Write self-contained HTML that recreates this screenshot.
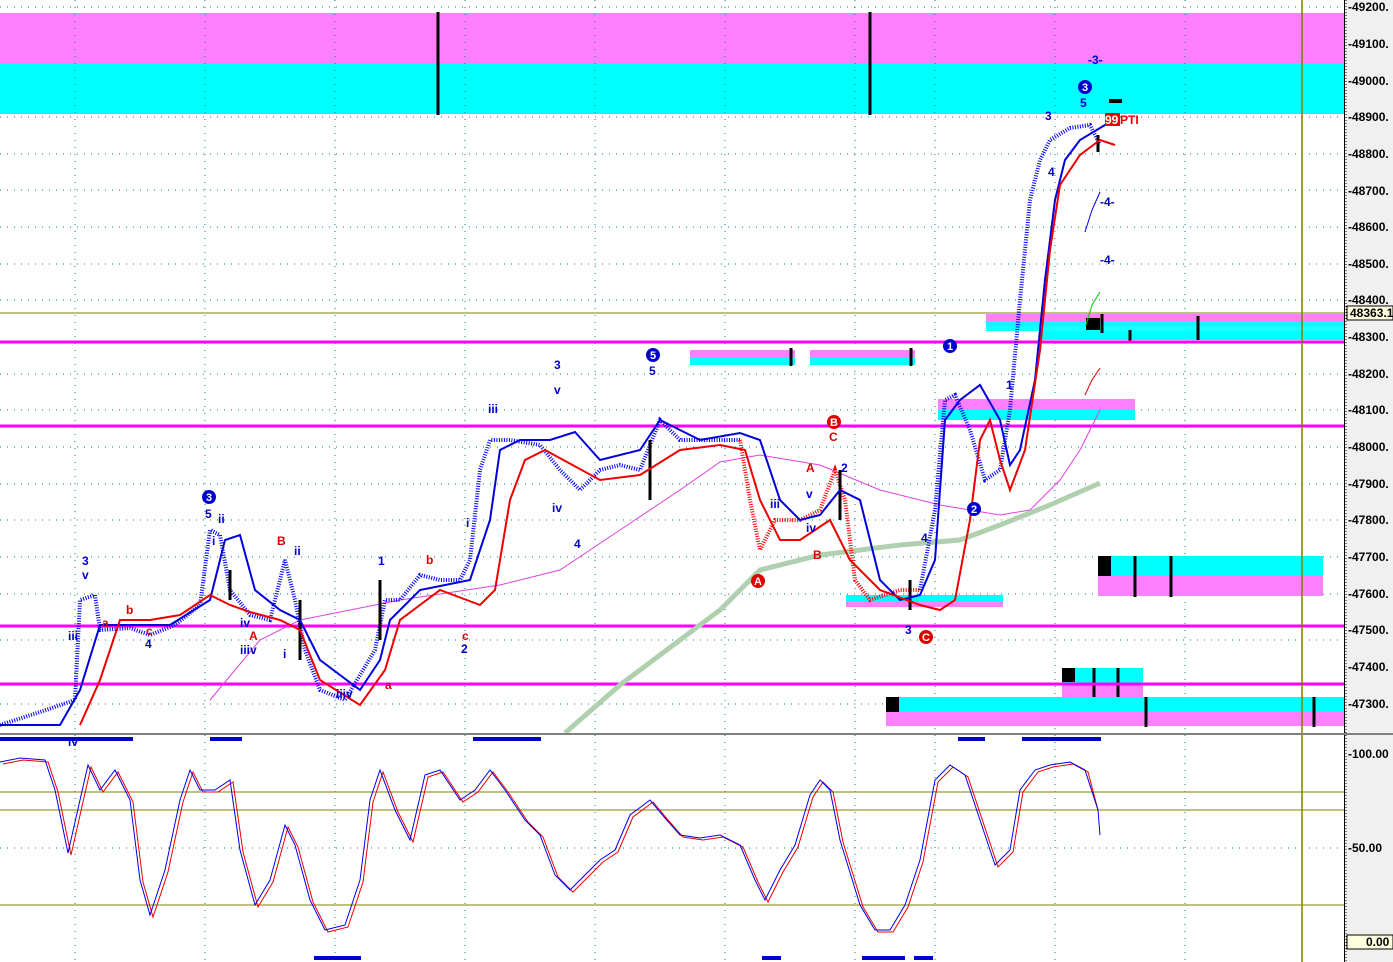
<!DOCTYPE html>
<html><head><meta charset="utf-8"><style>
html,body{margin:0;padding:0;background:#fff;width:1393px;height:962px;overflow:hidden;font-family:"Liberation Sans",sans-serif}
svg text{font-family:"Liberation Sans",sans-serif;font-weight:bold}
</style></head><body>
<svg width="1393" height="962" xmlns="http://www.w3.org/2000/svg">
<rect x="0" y="0" width="1393" height="962" fill="#fff"/>
<rect x="0" y="13" width="1344" height="50" fill="#ff80ff"/>
<rect x="0" y="63" width="1344" height="51" fill="#00ffff"/>
<g stroke="#008080" stroke-width="1" stroke-dasharray="1,6">
<line x1="0" y1="7" x2="1344" y2="7"/><line x1="0" y1="117" x2="1344" y2="117"/>
<line x1="0" y1="154" x2="1344" y2="154"/><line x1="0" y1="190" x2="1344" y2="190"/>
<line x1="0" y1="227" x2="1344" y2="227"/><line x1="0" y1="264" x2="1344" y2="264"/>
<line x1="0" y1="300" x2="1344" y2="300"/><line x1="0" y1="374" x2="1344" y2="374"/>
<line x1="0" y1="410" x2="1344" y2="410"/><line x1="0" y1="447" x2="1344" y2="447"/>
<line x1="0" y1="484" x2="1344" y2="484"/><line x1="0" y1="520" x2="1344" y2="520"/>
<line x1="0" y1="557" x2="1344" y2="557"/><line x1="0" y1="594" x2="1344" y2="594"/>
<line x1="0" y1="640" x2="1344" y2="640"/><line x1="0" y1="704" x2="1344" y2="704"/>
<line x1="0" y1="848" x2="1344" y2="848"/>
<line x1="75" y1="0" x2="75" y2="962"/><line x1="205" y1="0" x2="205" y2="962"/>
<line x1="335" y1="0" x2="335" y2="962"/><line x1="465" y1="0" x2="465" y2="962"/>
<line x1="595" y1="0" x2="595" y2="962"/><line x1="725" y1="0" x2="725" y2="962"/>
<line x1="855" y1="0" x2="855" y2="962"/><line x1="935" y1="0" x2="935" y2="962"/>
<line x1="1055" y1="0" x2="1055" y2="962"/><line x1="1185" y1="0" x2="1185" y2="962"/>
</g>
<line x1="438" y1="12" x2="438" y2="115" stroke="#000" stroke-width="3"/>
<line x1="870" y1="12" x2="870" y2="115" stroke="#000" stroke-width="3"/>
<rect x="986" y="314" width="358" height="13" fill="#ff80ff"/><rect x="986" y="322" width="358" height="9" fill="#00ffff" opacity="0.9"/>
<rect x="1040" y="331" width="304" height="9" fill="#00ffff"/>
<rect x="690" y="350" width="105" height="7" fill="#ff80ff"/><rect x="690" y="357" width="105" height="8" fill="#00ffff"/>
<rect x="810" y="350" width="105" height="7" fill="#ff80ff"/><rect x="810" y="357" width="105" height="8" fill="#00ffff"/>
<rect x="938" y="399" width="197" height="11" fill="#ff80ff"/><rect x="938" y="410" width="197" height="10" fill="#00ffff"/>
<rect x="846" y="595" width="157" height="7" fill="#00ffff"/><rect x="846" y="602" width="157" height="5" fill="#ff80ff"/>
<rect x="1098" y="556" width="225" height="20" fill="#00ffff"/><rect x="1098" y="576" width="225" height="20" fill="#ff80ff"/>
<rect x="1062" y="668" width="81" height="15" fill="#00ffff"/><rect x="1062" y="683" width="81" height="14" fill="#ff80ff"/>
<rect x="886" y="697" width="458" height="15" fill="#00ffff"/><rect x="886" y="712" width="458" height="14" fill="#ff80ff"/>
<g stroke="#000" stroke-width="3">
<line x1="791" y1="348" x2="791" y2="366"/><line x1="911" y1="348" x2="911" y2="366"/>
<line x1="1135" y1="556" x2="1135" y2="597"/><line x1="1171" y1="556" x2="1171" y2="597"/>
<line x1="1094" y1="668" x2="1094" y2="697"/><line x1="1118" y1="668" x2="1118" y2="697"/>
<line x1="1146" y1="697" x2="1146" y2="727"/><line x1="1314" y1="697" x2="1314" y2="727"/>
<line x1="1198" y1="316" x2="1198" y2="340"/><line x1="1102" y1="314" x2="1102" y2="333"/><line x1="1130" y1="330" x2="1130" y2="342"/>
</g>
<rect x="1098" y="556" width="13" height="20" fill="#000"/>
<rect x="1062" y="668" width="13" height="14" fill="#000"/>
<rect x="886" y="697" width="13" height="15" fill="#000"/>
<rect x="1086" y="318" width="14" height="12" fill="#000"/>
<line x1="0" y1="313" x2="1344" y2="313" stroke="#808000" stroke-width="1"/>
<line x1="0" y1="342" x2="1344" y2="342" stroke="#ff00ff" stroke-width="3"/>
<line x1="0" y1="426" x2="1344" y2="426" stroke="#ff00ff" stroke-width="3"/>
<line x1="0" y1="626" x2="1344" y2="626" stroke="#ff00ff" stroke-width="3"/>
<line x1="0" y1="684" x2="1344" y2="684" stroke="#ff00ff" stroke-width="3"/>
<line x1="1302" y1="0" x2="1302" y2="962" stroke="#808000" stroke-width="1.5"/>
<polyline fill="none" stroke="#b0d0b0" stroke-width="5" points="565,733 620,685 680,640 720,610 760,570 820,555 900,545 960,540 1000,525 1050,505 1100,483"/>
<polyline fill="none" stroke="#e040e0" stroke-width="1" points="210,700 260,640 300,620 400,600 500,585 560,570 620,530 680,490 720,462 760,455 820,465 880,490 940,505 1000,515 1030,510 1060,480 1080,450 1100,410"/>
<polyline fill="none" stroke="#0000ff" stroke-width="4" stroke-dasharray="1,1.5" points="0,725 40,712 75,700 80,600 95,595 100,630 130,628 150,635 175,625 200,605 210,530 220,535 230,590 250,615 270,620 285,560 295,600 305,650 320,690 345,700 375,650 385,600 400,600 420,575 440,580 460,580 470,560 480,470 490,440 510,440 540,445 560,470 580,490 600,470 620,465 640,470 660,420 680,440 710,440 740,440"/>
<polyline fill="none" stroke="#ff0000" stroke-width="4" stroke-dasharray="1,1.5" points="740,440 750,500 760,550 775,520 800,520 820,510 835,470 845,500 855,580 870,600 900,590 920,590"/>
<polyline fill="none" stroke="#0000ff" stroke-width="4" stroke-dasharray="1,1.5" points="920,590 935,510 945,400 955,395 970,430 985,480 1000,470 1010,410 1020,300 1030,200 1040,160 1050,140 1070,128 1090,125 1100,145"/>
<g stroke="#000" stroke-width="3"><line x1="230" y1="570" x2="230" y2="600"/><line x1="300" y1="600" x2="300" y2="660"/><line x1="380" y1="580" x2="380" y2="640"/><line x1="650" y1="440" x2="650" y2="500"/><line x1="840" y1="470" x2="840" y2="520"/><line x1="910" y1="580" x2="910" y2="610"/><line x1="1098" y1="135" x2="1098" y2="152"/></g>
<polyline fill="none" stroke="#0000dd" stroke-width="2" points="0,725 60,725 80,690 100,625 130,625 170,625 210,600 225,540 240,535 255,590 280,610 300,620 320,660 360,690 380,660 390,620 420,590 470,580 490,520 500,450 520,440 550,440 575,432 600,460 640,450 660,420 700,440 740,433 760,440 780,500 800,520 820,515 840,490 860,500 880,580 900,600 920,595 935,560 945,420 960,400 980,385 1000,420 1010,465 1020,450 1035,380 1045,280 1055,200 1065,160 1080,140 1110,122"/>
<polyline fill="none" stroke="#ee0000" stroke-width="2" points="80,725 100,680 120,620 150,620 180,615 210,595 230,605 250,612 280,620 300,630 320,680 360,705 385,670 400,620 440,590 480,605 495,590 510,500 525,460 545,450 600,480 640,475 680,450 720,445 745,450 760,500 780,540 800,540 830,520 850,560 880,590 920,605 940,610 955,600 970,520 980,440 990,420 1000,460 1010,490 1025,450 1040,350 1050,250 1060,185 1080,155 1100,140 1115,145"/>
<g font-size="12" fill="#0000cc">
<text x="82" y="565">3</text><text x="82" y="579">v</text><text x="145" y="648">4</text><text x="205" y="518">5</text><text x="212" y="545">i</text><text x="218" y="523">ii</text>
<text x="294" y="555">ii</text><text x="283" y="658">i</text><text x="378" y="565">1</text><text x="336" y="698">iiiv</text><text x="461" y="653">2</text>
<text x="488" y="413">iii</text><text x="554" y="369">3</text><text x="554" y="394">v</text><text x="552" y="512">iv</text><text x="574" y="548">4</text>
<text x="649" y="375">5</text><text x="770" y="508">iii</text><text x="806" y="498">v</text><text x="806" y="532">iv</text><text x="841" y="472">2</text>
<text x="921" y="542">4</text><text x="905" y="634">3</text><text x="921" y="640">5</text><text x="1006" y="389">1</text>
<text x="1045" y="120">3</text><text x="1080" y="107">5</text><text x="1048" y="176">4</text><text x="1088" y="64">-3-</text><text x="1100" y="206">-4-</text><text x="1100" y="264">-4-</text>
<text x="68" y="640">iii</text><text x="240" y="627">iv</text><text x="240" y="654">iiiv</text><text x="466" y="527">i</text><text x="68" y="746">iv</text>
</g>
<g font-size="12" fill="#dd0000">
<text x="126" y="614">b</text><text x="102" y="627">a</text><text x="146" y="635">c</text><text x="277" y="545">B</text><text x="249" y="640">A</text>
<text x="426" y="564">b</text><text x="385" y="689">a</text><text x="462" y="640">c</text><text x="806" y="472">A</text><text x="829" y="441">C</text><text x="813" y="559">B</text>
</g>
<g font-size="11" fill="#fff" text-anchor="middle">
<circle cx="209" cy="497" r="7" fill="#0000cc"/><text x="209" y="501">3</text>
<circle cx="653" cy="355" r="7" fill="#0000cc"/><text x="653" y="359">5</text>
<circle cx="950" cy="346" r="7" fill="#0000cc"/><text x="950" y="350">1</text>
<circle cx="974" cy="509" r="7" fill="#0000cc"/><text x="974" y="513">2</text>
<circle cx="1085" cy="87" r="7" fill="#0000cc"/><text x="1085" y="91">3</text>
<circle cx="758" cy="581" r="7" fill="#dd0000"/><text x="758" y="585">A</text>
<circle cx="834" cy="422" r="7" fill="#dd0000"/><text x="834" y="426">B</text>
<circle cx="926" cy="637" r="7" fill="#dd0000"/><text x="926" y="641">C</text>
</g>
<rect x="1105" y="113" width="15" height="13" fill="#ee0000"/>
<text x="1105" y="124" font-size="12" fill="#fff">99</text><text x="1120" y="124" font-size="12" fill="#ee0000">PTI</text>
<rect x="1109" y="99" width="13" height="4" fill="#000"/>
<polyline fill="none" stroke="#00cc00" stroke-width="1" points="1086,325 1092,305 1100,292"/>
<polyline fill="none" stroke="#dd0000" stroke-width="1" points="1085,395 1092,380 1100,368"/>
<polyline fill="none" stroke="#0000dd" stroke-width="1" points="1085,232 1092,210 1100,192"/>
<g fill="#0000cc"><rect x="0" y="737" width="133" height="4"/><rect x="210" y="737" width="32" height="4"/><rect x="473" y="737" width="68" height="4"/><rect x="958" y="737" width="27" height="4"/><rect x="1022" y="737" width="79" height="4"/>
<rect x="314" y="956" width="47" height="4"/><rect x="762" y="956" width="19" height="4"/><rect x="862" y="956" width="43" height="4"/><rect x="914" y="956" width="19" height="4"/></g>
<line x1="0" y1="734" x2="1344" y2="734" stroke="#808080" stroke-width="2"/>
<g stroke="#808000" stroke-width="1"><line x1="0" y1="792" x2="1344" y2="792"/><line x1="0" y1="810" x2="1344" y2="810"/><line x1="0" y1="905" x2="1344" y2="905"/></g>
<polyline fill="none" stroke="#ee0000" stroke-width="1" transform="translate(3,2)" points="0,762 20,758 45,760 55,790 68,853 80,800 88,765 100,790 115,770 130,800 140,880 150,915 165,870 180,800 190,770 200,790 215,790 230,780 240,850 255,905 270,880 285,825 295,845 310,900 325,930 345,925 360,880 370,800 380,770 395,810 410,840 425,775 440,770 460,800 475,790 490,770 505,790 525,820 540,835 555,875 570,890 585,875 600,860 615,850 630,815 650,800 665,818 680,835 700,838 720,835 740,845 755,880 765,900 780,870 795,845 810,795 820,780 830,790 840,840 860,905 875,930 890,930 905,905 920,860 935,780 950,765 965,775 980,820 995,865 1010,850 1020,790 1035,770 1050,765 1070,762 1085,770 1095,808"/>
<polyline fill="none" stroke="#0000ee" stroke-width="1" points="0,762 20,758 45,760 55,790 68,853 80,800 88,765 100,790 115,770 130,800 140,880 150,915 165,870 180,800 190,770 200,790 215,790 230,780 240,850 255,905 270,880 285,825 295,845 310,900 325,930 345,925 360,880 370,800 380,770 395,810 410,840 425,775 440,770 460,800 475,790 490,770 505,790 525,820 540,835 555,875 570,890 585,875 600,860 615,850 630,815 650,800 665,818 680,835 700,838 720,835 740,845 755,880 765,900 780,870 795,845 810,795 820,780 830,790 840,840 860,905 875,930 890,930 905,905 920,860 935,780 950,765 965,775 980,820 995,865 1010,850 1020,790 1035,770 1050,765 1070,762 1085,770 1098,810 1100,835"/>
<rect x="1344" y="0" width="49" height="962" fill="#f0f0f0"/>
<line x1="1344.5" y1="0" x2="1344.5" y2="962" stroke="#000" stroke-width="1"/>
<line x1="1346" y1="0" x2="1346" y2="962" stroke="#000" stroke-dasharray="1,2"/>
<line x1="1344" y1="734" x2="1393" y2="734" stroke="#808080" stroke-width="2"/>
<g font-size="12" fill="#000">
<text x="1348" y="11">-49200.</text><text x="1348" y="48">-49100.</text><text x="1348" y="85">-49000.</text><text x="1348" y="121">-48900.</text>
<text x="1348" y="158">-48800.</text><text x="1348" y="195">-48700.</text><text x="1348" y="231">-48600.</text><text x="1348" y="268">-48500.</text>
<text x="1348" y="304">-48400.</text><text x="1348" y="341">-48300.</text><text x="1348" y="378">-48200.</text><text x="1348" y="414">-48100.</text>
<text x="1348" y="451">-48000.</text><text x="1348" y="488">-47900.</text><text x="1348" y="524">-47800.</text><text x="1348" y="561">-47700.</text>
<text x="1348" y="598">-47600.</text><text x="1348" y="634">-47500.</text><text x="1348" y="671">-47400.</text><text x="1348" y="708">-47300.</text>
<text x="1348" y="758">-100.00</text><text x="1348" y="852">-50.00</text>
</g>
<rect x="1347" y="306" width="46" height="14" fill="#ffffe0" stroke="#000" stroke-width="1"/>
<text x="1350" y="317" font-size="12" fill="#000">48363.1</text>
<rect x="1347" y="935" width="46" height="14" fill="#ffffe0" stroke="#000" stroke-width="1"/>
<text x="1366" y="946" font-size="12" fill="#000">0.00</text>
</svg>
</body></html>
